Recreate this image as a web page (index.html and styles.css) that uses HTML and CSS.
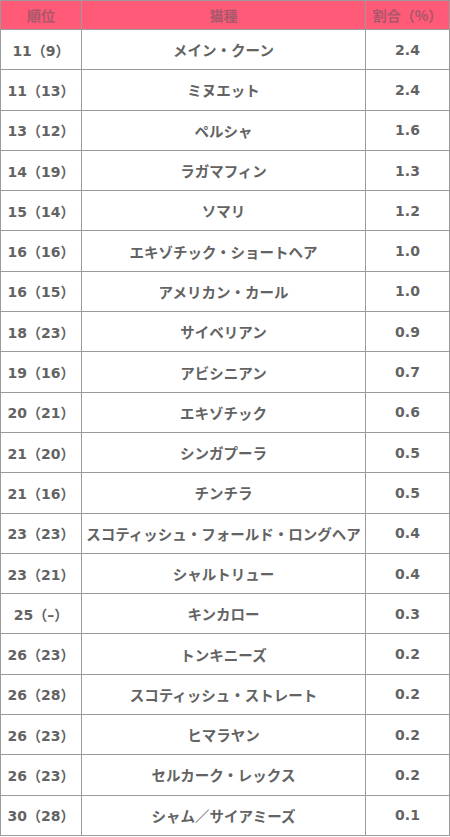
FILE: index.html
```html
<!DOCTYPE html>
<html lang="ja">
<head>
<meta charset="utf-8">
<link rel="stylesheet" href="styles.css">
</head>
<body>
<table class="rank">
  <thead>
    <tr><th class="c1">順位</th><th class="c2">猫種</th><th class="c3">割合（%）</th></tr>
  </thead>
  <tbody>
    <tr><td>11（9）</td><td>メイン・クーン</td><td>2.4</td></tr>
    <tr><td>11（13）</td><td>ミヌエット</td><td>2.4</td></tr>
    <tr><td>13（12）</td><td>ペルシャ</td><td>1.6</td></tr>
    <tr><td>14（19）</td><td>ラガマフィン</td><td>1.3</td></tr>
    <tr><td>15（14）</td><td>ソマリ</td><td>1.2</td></tr>
    <tr><td>16（16）</td><td>エキゾチック・ショートヘア</td><td>1.0</td></tr>
    <tr><td>16（15）</td><td>アメリカン・カール</td><td>1.0</td></tr>
    <tr><td>18（23）</td><td>サイベリアン</td><td>0.9</td></tr>
    <tr><td>19（16）</td><td>アビシニアン</td><td>0.7</td></tr>
    <tr><td>20（21）</td><td>エキゾチック</td><td>0.6</td></tr>
    <tr><td>21（20）</td><td>シンガプーラ</td><td>0.5</td></tr>
    <tr><td>21（16）</td><td>チンチラ</td><td>0.5</td></tr>
    <tr><td>23（23）</td><td>スコティッシュ・フォールド・ロングヘア</td><td>0.4</td></tr>
    <tr><td>23（21）</td><td>シャルトリュー</td><td>0.4</td></tr>
    <tr><td>25（–）</td><td>キンカロー</td><td>0.3</td></tr>
    <tr><td>26（23）</td><td>トンキニーズ</td><td>0.2</td></tr>
    <tr><td>26（28）</td><td>スコティッシュ・ストレート</td><td>0.2</td></tr>
    <tr><td>26（23）</td><td>ヒマラヤン</td><td>0.2</td></tr>
    <tr><td>26（23）</td><td>セルカーク・レックス</td><td>0.2</td></tr>
    <tr><td>30（28）</td><td>シャム／サイアミーズ</td><td>0.1</td></tr>
  </tbody>
</table>
</body>
</html>
```

FILE: styles.css
```css
html, body {
  margin: 0;
  padding: 0;
  background: #ffffff;
}
.rank {
  border-collapse: collapse;
  width: 449px;
  table-layout: fixed;
  font-family: "DejaVu Sans", "Noto Sans CJK JP", sans-serif;
  font-weight: bold;
  font-size: 14px;
  color: #636363;
}
.rank th, .rank td {
  border: 1px solid #9a9a9a;
  text-align: center;
  padding: 0;
  white-space: nowrap;
}
.rank th {
  background: #ff5a78;
  color: #a8586a;
  height: 28px;
  font-family: "Noto Sans CJK JP", sans-serif;
  font-size: 14px;
}
.rank td {
  height: 39.3px;
}
.rank td:nth-child(2) {
  font-family: "Noto Sans CJK JP", sans-serif;
  font-size: 14.5px;
}
.c1 { width: 80px; }
.c2 { width: 283px; }
.c3 { width: 83px; }
```
